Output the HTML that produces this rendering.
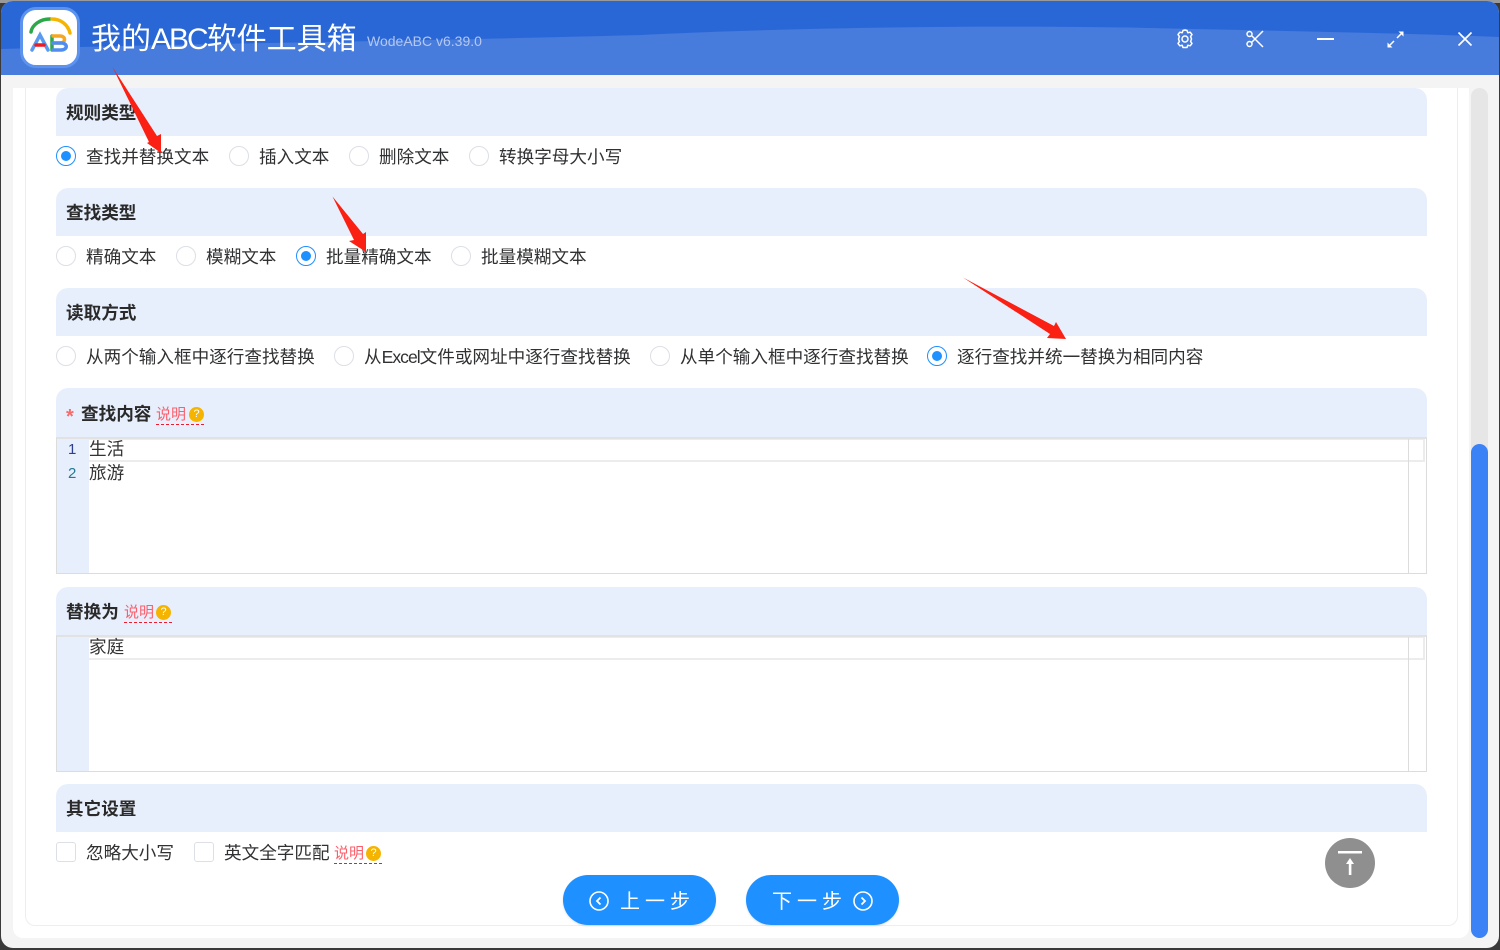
<!DOCTYPE html>
<html><head><meta charset="utf-8"><style>
html,body{margin:0;padding:0;width:1500px;height:950px;overflow:hidden;background:#3a3a3a}
body{position:relative;font-family:"Liberation Sans","Noto Sans CJK SC",sans-serif;color:#333}
div,span{position:absolute;box-sizing:border-box}
i{font-style:normal}
.t{white-space:nowrap;font-size:17.6px;line-height:24px;color:#303133}
.h{left:56px;width:1371px;height:48px;background:#e8effc;border-radius:12px 12px 0 0}
.b{white-space:nowrap;font-size:17.6px;line-height:24px;font-weight:bold;color:#2a2a2a}
.r{width:20px;height:20px;border-radius:50%;border:1px solid #dcdfe6;background:#fff}
.r.on{border-color:#1e90ff}
.r.on:after{content:"";position:absolute;left:4px;top:4px;width:10px;height:10px;border-radius:50%;background:#1e90ff}
.c{width:20px;height:20px;border-radius:3px;border:1px solid #dcdfe6;background:#fff}
.ed{left:56px;width:1371px;border:1px solid #dcdcdc;border-top:2px solid #e2e2e2;background:#fff}
.gut{left:0;top:0;bottom:0;width:32px;background:#e8effc}
.line{left:32px;right:1px;top:0;height:23px;border:2px solid #ececec;border-left:0;border-top:1px solid #ececec}
.sb{right:0;top:0;bottom:0;width:18px;border-left:1px solid #dcdcdc}
.m{white-space:nowrap;font-size:15px;line-height:18px;color:#fb5f6b;border-bottom:1px dashed #f01a2c;height:19px}
.q{width:15px;height:15px;border-radius:50%;background:#f5b400;color:#fff;font-size:11px;line-height:15px;text-align:center}
.code{white-space:nowrap;font-size:17.6px;line-height:24px;color:#333}
.btn{height:50px;width:153px;top:875px;border-radius:25px;background:#1e90ff;box-shadow:0 1px 2px rgba(0,0,0,.12)}
.bt{white-space:nowrap;color:#fff;font-size:20px;line-height:24px;letter-spacing:5px;top:15px}
svg{position:absolute;overflow:visible}
</style></head><body>
<div style="left:0;top:0;width:1500px;height:3px;background:#9a9a9a"></div>
<div id="win" style="left:1px;top:1px;width:1498px;height:947px;background:#f4f4f4;border-radius:12px;overflow:hidden">
  <div style="left:0;top:0;width:1498px;height:74px;background:#2a67d6"></div>
  <svg style="left:0;top:0" width="1498" height="74"><path d="M0 48 C220 42 420 40 640 34 C800 26 1000 24 1150 27 C1280 30 1400 32 1498 36 L1498 74 L0 74 Z" fill="#477bdc"/></svg>
</div>
<!-- logo -->
<div style="left:20px;top:7px;width:60px;height:61px;border-radius:16px;background:#fff;border:3px solid #5b93ef"></div>
<svg style="left:20px;top:7px" width="60" height="61" fill="none" stroke-linecap="round">
  <path d="M11 25 C12 18 20 12 30 12" stroke="#2ca84a" stroke-width="3.5"/>
  <path d="M32 12 C41 12 48 18 50 26" stroke="#f5b400" stroke-width="3.5"/>
  <path d="M12 43 L20 28 L28 43" stroke="#5a9bf0" stroke-width="3.5"/>
  <path d="M16 38 L24 38" stroke="#ec1c24" stroke-width="3.5"/>
  <path d="M32 29 L32 43" stroke="#2ca84a" stroke-width="3.5"/>
  <path d="M33 29 H40 C46 29 46 36 40 36 H33" stroke="#f5a623" stroke-width="3.5"/>
  <path d="M33 36 H41 C48 36 48 43 41 43 H33" stroke="#4f8df0" stroke-width="3.5"/>
</svg>
<div class="t" style="left:91px;top:18px;font-size:30px;line-height:44px;color:#fff">我的<i style="letter-spacing:-2px">ABC</i>软件工具箱</div>
<div class="t" style="left:367px;top:30px;font-size:14px;line-height:22px;color:#b4c8f0">WodeABC v6.39.0</div>
<!-- win icons -->
<svg style="left:1175px;top:29px" width="20" height="20" fill="none" stroke="#fff" stroke-width="1.5"><path d="M10 1 L12 1.5 L12.8 3.8 L15.2 3.2 L17 5.6 L15.6 7.5 L16.5 10 L15.6 12.5 L17 14.4 L15.2 16.8 L12.8 16.2 L12 18.5 L8 18.5 L7.2 16.2 L4.8 16.8 L3 14.4 L4.4 12.5 L3.5 10 L4.4 7.5 L3 5.6 L4.8 3.2 L7.2 3.8 L8 1.5 Z" stroke-linejoin="round"/><circle cx="10" cy="10" r="3"/></svg>
<svg style="left:1246px;top:30px" width="18" height="18" fill="none" stroke="#fff" stroke-width="1.5"><circle cx="3.5" cy="4" r="2.5"/><circle cx="3.5" cy="14" r="2.5"/><path d="M5.5 5.5 L17 17 M5.5 12.5 L17 1"/></svg>
<div style="left:1317px;top:38px;width:17px;height:2px;background:#fff"></div>
<svg style="left:1387px;top:31px" width="17" height="17" fill="none" stroke="#fff" stroke-width="1.5"><path d="M3 14 L7 10 M10 7 L14 3"/><path d="M0.5 16.5 L0.5 11.5 L5.5 16.5 Z M16.5 0.5 L16.5 5.5 L11.5 0.5 Z" fill="#fff" stroke="none"/></svg>
<svg style="left:1458px;top:32px" width="14" height="14" fill="none" stroke="#fff" stroke-width="1.6"><path d="M0.5 0.5 L13.5 13.5 M13.5 0.5 L0.5 13.5"/></svg>

<!-- panel -->
<div style="left:13px;top:88px;width:1456px;height:850px;background:#fff;border-radius:0 0 10px 10px"></div>
<div style="left:25px;top:88px;width:1433px;height:838px;background:#fff;border:1px solid #eeeeee;border-top:0;border-radius:0 0 10px 10px"></div>
<div style="left:1471px;top:88px;width:17px;height:850px;background:#e6e6e6;border-radius:9px"></div>
<div style="left:1471px;top:444px;width:17px;height:494px;background:#3b82f6;border-radius:9px"></div>

<div class="h" style="top:88px"></div><div class="b" style="left:66px;top:101px">规则类型</div>
<div class="r on" style="left:56px;top:146px"></div><div class="t" style="left:86px;top:145px">查找并替换文本</div>
<div class="r" style="left:229px;top:146px"></div><div class="t" style="left:259px;top:145px">插入文本</div>
<div class="r" style="left:349px;top:146px"></div><div class="t" style="left:379px;top:145px">删除文本</div>
<div class="r" style="left:469px;top:146px"></div><div class="t" style="left:499px;top:145px">转换字母大小写</div>

<div class="h" style="top:188px"></div><div class="b" style="left:66px;top:201px">查找类型</div>
<div class="r" style="left:56px;top:246px"></div><div class="t" style="left:86px;top:245px">精确文本</div>
<div class="r" style="left:176px;top:246px"></div><div class="t" style="left:206px;top:245px">模糊文本</div>
<div class="r on" style="left:296px;top:246px"></div><div class="t" style="left:326px;top:245px">批量精确文本</div>
<div class="r" style="left:451px;top:246px"></div><div class="t" style="left:481px;top:245px">批量模糊文本</div>

<div class="h" style="top:288px"></div><div class="b" style="left:66px;top:301px">读取方式</div>
<div class="r" style="left:56px;top:346px"></div><div class="t" style="left:86px;top:345px">从两个输入框中逐行查找替换</div>
<div class="r" style="left:334px;top:346px"></div><div class="t" style="left:364px;top:345px">从<i style="letter-spacing:-1px">Excel</i>文件或网址中逐行查找替换</div>
<div class="r" style="left:650px;top:346px"></div><div class="t" style="left:680px;top:345px">从单个输入框中逐行查找替换</div>
<div class="r on" style="left:927px;top:346px"></div><div class="t" style="left:957px;top:345px">逐行查找并统一替换为相同内容</div>

<div class="h" style="top:388px;height:49px"></div>
<div class="b" style="left:66px;top:405px;color:#f56c6c;font-size:20px">*</div><div class="b" style="left:81px;top:402px">查找内容</div>
<div class="m" style="left:156px;top:406px;width:48px">说明</div><div class="q" style="left:189px;top:407px">?</div>
<div class="ed" style="top:437px;height:137px">
  <div class="gut"></div>
  <div class="line"></div>
  <div class="sb"></div>
  <div class="code" style="left:11px;top:-1px;font-size:15px;color:#2d3f8c">1</div>
  <div class="code" style="left:11px;top:23px;font-size:15px;color:#237893">2</div>
  <div class="code" style="left:32px;top:-2px">生活</div>
  <div class="code" style="left:32px;top:22px">旅游</div>
</div>

<div class="h" style="top:587px"></div>
<div class="b" style="left:66px;top:600px">替换为</div>
<div class="m" style="left:124px;top:604px;width:48px">说明</div><div class="q" style="left:156px;top:605px">?</div>
<div class="ed" style="top:635px;height:137px">
  <div class="gut"></div>
  <div class="line"></div>
  <div class="sb"></div>
  <div class="code" style="left:32px;top:-2px">家庭</div>
</div>

<div class="h" style="top:784px"></div><div class="b" style="left:66px;top:797px">其它设置</div>
<div class="c" style="left:56px;top:842px"></div><div class="t" style="left:86px;top:841px">忽略大小写</div>
<div class="c" style="left:194px;top:842px"></div><div class="t" style="left:224px;top:841px">英文全字匹配</div>
<div class="m" style="left:334px;top:845px;width:48px">说明</div><div class="q" style="left:366px;top:846px">?</div>

<!-- buttons -->
<div class="btn" style="left:563px">
  <svg style="left:26px;top:16px" width="20" height="20" fill="none" stroke="#fff" stroke-width="1.6"><circle cx="10" cy="10" r="9"/><path d="M11.5 6.5 L8 10 L11.5 13.5" stroke-width="1.8"/></svg>
  <div class="bt" style="left:57px">上一步</div>
</div>
<div class="btn" style="left:746px">
  <div class="bt" style="left:26px">下一步</div>
  <svg style="left:107px;top:16px" width="20" height="20" fill="none" stroke="#fff" stroke-width="1.6"><circle cx="10" cy="10" r="9"/><path d="M8.5 6.5 L12 10 L8.5 13.5" stroke-width="1.8"/></svg>
</div>
<!-- back top -->
<div style="left:1325px;top:838px;width:50px;height:50px;border-radius:50%;background:#8f8f8f"></div>
<svg style="left:1325px;top:838px" width="50" height="50" fill="#fff"><rect x="13" y="13" width="24" height="2.5"/><rect x="23.8" y="24" width="2.6" height="13"/><path d="M25 20 L29 26 L21 26 Z"/></svg>

<!-- red arrows -->
<svg style="left:0;top:0" width="1500" height="950" fill="#fa2014">
  <path d="M112.5 67 L157 136 L161 134 L161 153 L147 143 L149 142 Z"/>
  <path d="M332.5 196.5 L363 234 L366 232 L366 252 L349 241 L354 240 Z"/>
  <path d="M963 277.5 L1054 326 L1056 322 L1066 339 L1047 338 L1050 334 Z"/>
</svg>
</body></html>
